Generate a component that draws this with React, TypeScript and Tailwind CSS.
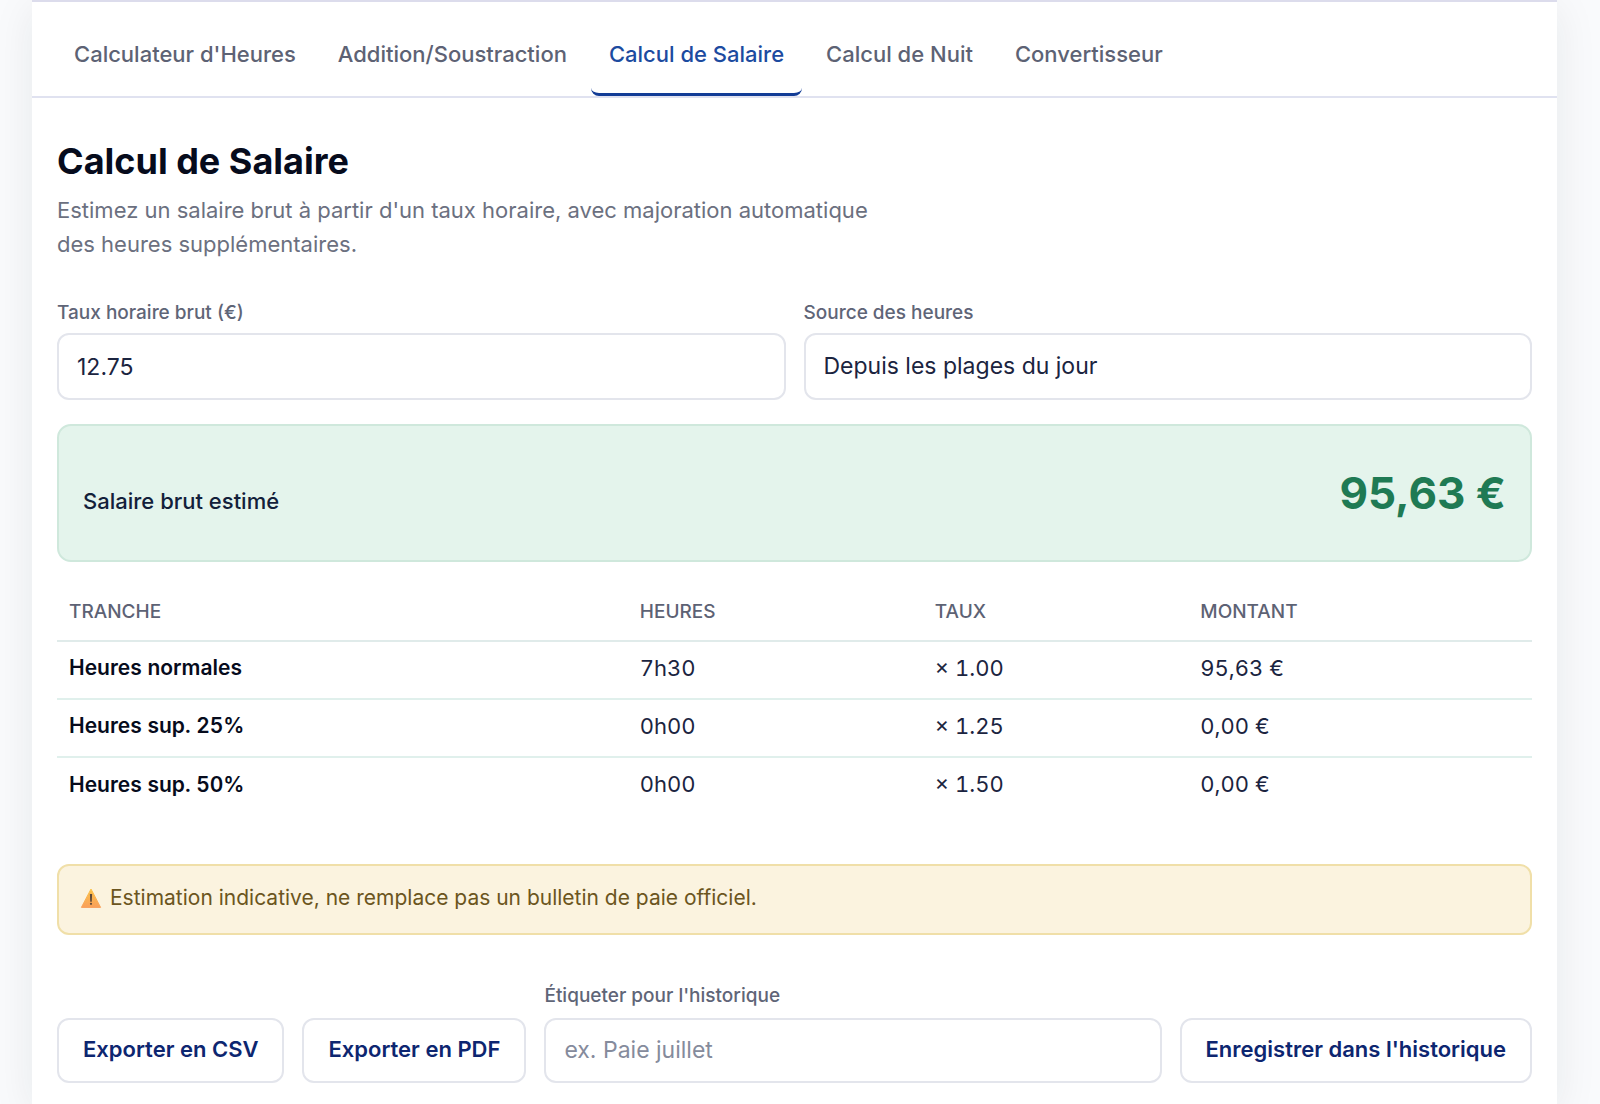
import React, { useState } from 'react'

const tabs = ["Calculateur d'Heures", 'Addition/Soustraction', 'Calcul de Salaire', 'Calcul de Nuit', 'Convertisseur']

const rows = [
    { label: 'Heures normales', hours: '7h30', rate: '× 1.00', amount: '95,63 €' },
    { label: 'Heures sup. 25%', hours: '0h00', rate: '× 1.25', amount: '0,00 €' },
    { label: 'Heures sup. 50%', hours: '0h00', rate: '× 1.50', amount: '0,00 €' },
]

function WarningIcon() {
    return (
        <svg viewBox="0 0 22 22" className="h-[22px] w-[22px] shrink-0" aria-hidden="true">
            <defs>
                <linearGradient id="warning-fill" x1="0" y1="0" x2="0" y2="1">
                    <stop offset="0" stopColor="#fbc34a" />
                    <stop offset="1" stopColor="#f9a05a" />
                </linearGradient>
            </defs>
            <path d="M11 2 L20.6 20.4 H1.4 Z" fill="url(#warning-fill)" stroke="url(#warning-fill)" strokeWidth="1" strokeLinejoin="round" />
            <path d="M9.9 7 H12.1 L11.8 14.8 H10.2 Z" fill="#5d4a3c" />
            <circle cx="11" cy="16.8" r="1.1" fill="#5d4a3c" />
        </svg>
    )
}

export default function App() {
    const [activeTab, setActiveTab] = useState('Calcul de Salaire')
    const [rate, setRate] = useState('12.75')

    return (
        <div className="min-h-screen bg-[#f9fafc] pl-8 pr-[43px] font-['Inter','Liberation_Sans',sans-serif] text-[#1b2440]">
            <main className="min-h-screen border-t-2 border-[#dcdcec] bg-white pb-5 shadow-[0_8px_40px_rgba(20,40,40,0.08)]">
                {/* Tabs */}
                <nav className="flex gap-1.5 border-b-2 border-[#e0e2f0] px-6 pt-3">
                    {tabs.map((tab) => (
                        <button
                            key={tab}
                            type="button"
                            onClick={() => setActiveTab(tab)}
                            className={
                                tab === activeTab
                                    ? 'h-[82px] rounded-lg border-b-[3px] border-[#123c96] px-[18px] pt-0.5 text-[22px] font-medium text-[#1c4ba0]'
                                    : 'h-[82px] rounded-lg border-b-[3px] border-transparent px-[18px] pt-0.5 text-[22px] font-medium text-[#5d6274]'
                            }
                        >
                            {tab}
                        </button>
                    ))}
                </nav>

                <section className="px-[25px] pt-10">
                    <h1 className="text-[36px] font-bold leading-[46px] text-[#060b1c]">Calcul de Salaire</h1>
                    <p className="mt-[9px] max-w-[840px] text-[22px] leading-[34px] text-[#6b7080]">
                        Estimez un salaire brut à partir d'un taux horaire, avec majoration automatique des heures supplémentaires.
                    </p>

                    <div className="mt-10 grid grid-cols-2 gap-[18px]">
                        <div>
                            <label htmlFor="rate" className="block text-[19px] font-medium leading-6 text-[#5f6577]">Taux horaire brut (€)</label>
                            <input
                                id="rate"
                                value={rate}
                                onChange={(e) => setRate(e.target.value)}
                                className="mt-2 h-[67px] w-full rounded-xl border-2 border-[#e3e5ec] bg-white px-[18px] text-[23px]"
                            />
                        </div>
                        <div>
                            <label htmlFor="source" className="block text-[19px] font-medium leading-6 text-[#5f6577]">Source des heures</label>
                            <select id="source" className="mt-2 h-[67px] w-full appearance-none rounded-xl border-2 border-[#e3e5ec] bg-white px-[18px] text-[23px]">
                                <option>Depuis les plages du jour</option>
                            </select>
                        </div>
                    </div>

                    {/* Result */}
                    <div className="mt-6 flex h-[138px] items-center rounded-[14px] border-2 border-[#cfe8dc] bg-[#e4f4ec] px-6">
                        <div className="flex w-full items-baseline justify-between">
                            <span className="text-[22px] font-medium text-[#12203a]">Salaire brut estimé</span>
                            <strong className="text-[44px] font-bold leading-[60px] text-[#1f7a54]">95,63 €</strong>
                        </div>
                    </div>

                    <table className="mt-6 w-full table-fixed text-left tabular-nums">
                        <colgroup>
                            <col className="w-[38.7%]" />
                            <col className="w-[20%]" />
                            <col className="w-[18%]" />
                            <col />
                        </colgroup>
                        <thead>
                            <tr className="h-[55px] border-b-2 border-[#e0ebea] text-[19px] uppercase text-[#5d6274]">
                                <th className="px-3 pb-0.5 font-medium">Tranche</th>
                                <th className="px-3 pb-0.5 font-medium">Heures</th>
                                <th className="px-3 pb-0.5 font-medium">Taux</th>
                                <th className="px-3 pb-0.5 font-medium">Montant</th>
                            </tr>
                        </thead>
                        <tbody>
                            {rows.map((row) => (
                                <tr key={row.label} className="h-[58px] border-b-2 border-[#e0f0ec] text-[22px] last:border-b-0">
                                    <th scope="row" className="px-3 pb-1 text-[21px] font-semibold text-[#060b1c]">{row.label}</th>
                                    <td className="px-3 pb-1">{row.hours}</td>
                                    <td className="px-3 pb-1">{row.rate}</td>
                                    <td className="px-3 pb-1">{row.amount}</td>
                                </tr>
                            ))}
                        </tbody>
                    </table>

                    <div className="mt-[49px] flex h-[71px] items-center gap-2 rounded-xl border-2 border-[#f0dfa8] bg-[#fbf3df] px-[21px] pb-1 text-[21px] text-[#6b5520]">
                        <WarningIcon />
                        <p>Estimation indicative, ne remplace pas un bulletin de paie officiel.</p>
                    </div>

                    {/* Actions */}
                    <div className="mt-[49px] flex items-end gap-[18px]">
                        <button type="button" className="h-[65px] rounded-xl border-2 border-[#e3e5ec] px-6 pb-0.5 text-[22px] font-semibold text-[#0d2670]">Exporter en CSV</button>
                        <button type="button" className="h-[65px] rounded-xl border-2 border-[#e3e5ec] px-6 pb-0.5 text-[22px] font-semibold text-[#0d2670]">Exporter en PDF</button>
                        <div className="min-w-0 flex-1">
                            <label htmlFor="tag" className="block text-[19px] font-medium leading-6 text-[#5f6577]">Étiqueter pour l'historique</label>
                            <input
                                id="tag"
                                placeholder="ex. Paie juillet"
                                className="mt-2.5 block h-[65px] w-full rounded-xl border-2 border-[#e3e5ec] bg-white px-[18px] pb-0.5 text-[23px] placeholder:text-[#858b9c]"
                            />
                        </div>
                        <button type="button" className="h-[65px] rounded-xl border-2 border-[#e3e5ec] px-6 pb-0.5 text-[22px] font-semibold text-[#0d2670]">Enregistrer dans l'historique</button>
                    </div>
                </section>
            </main>
        </div>
    )
}
